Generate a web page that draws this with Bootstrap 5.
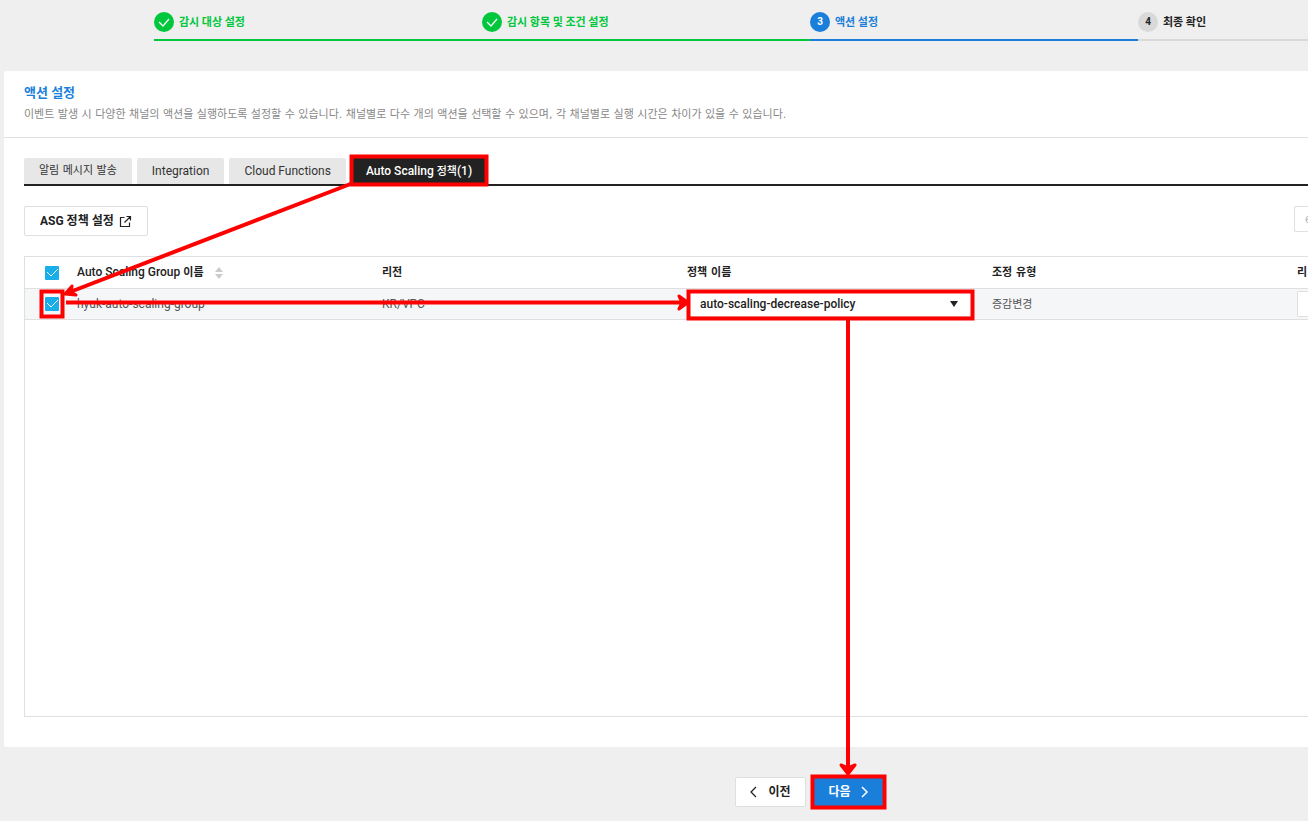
<!DOCTYPE html>
<html lang="ko">
<head>
<meta charset="utf-8">
<meta name="viewport" content="width=device-width, initial-scale=1">
<title>액션 설정</title>
<link href="https://cdn.jsdelivr.net/npm/bootstrap@5.3.0/dist/css/bootstrap.min.css" rel="stylesheet">
<style>
body{background:#efefef;color:#222;font:400 12px/20px Roboto,"Noto Sans CJK KR",sans-serif}
.ko{font-family:"DejaVu Sans","Noto Sans CJK KR",sans-serif;font-size:11px}
.steps{padding:12px 0 0 154px}
.step{flex:0 1 328px;border-bottom:2px solid #d9d9d9;height:29px;font-weight:500;gap:5px}
.step:last-child{flex:1 0 0}
.step .ko{font-family:Inter,"Noto Sans CJK KR",sans-serif;font-weight:700}
.step-num{width:20px;height:20px;border-radius:50%;background:#d9d9d9;font-size:10px;font-weight:700}
.step.done{border-color:#00c73c;color:#00c73c}
.step.done .step-num{background:#00c73c}
.step.now{border-color:#1a7fdb;color:#1a7fdb}
.step.now .step-num{background:#1a7fdb;color:#fff}
.panel{margin:30px 0 0 4px;border-radius:2px 0 0 2px}
.panel-head{padding:12px 20px;border-bottom:1px solid #dfdfdf}
.panel-head h1{font-size:13px;line-height:20px;font-weight:700;color:#1a7fdb;margin:0 0 2px}
.panel-head p{color:#888}
.panel-body{padding:20px 0 30px 20px}
.policy-tabs{border-bottom:2px solid #222;gap:5px}
.policy-tabs .nav-link{height:26px;padding:3px 15px;background:#e7e7e7;color:#333;border:0;border-radius:2px 2px 0 0}
.policy-tabs .nav-link.active{background:#222;color:#fff;font-weight:500}
.tools{padding:20px 0}
.plain{height:30px;border:1px solid #dfdfdf;border-radius:2px;background:#fff;color:#222;font-size:12px;line-height:20px;font-weight:700;padding:0 15px;gap:5px}
.step-btn{padding:0 14px;gap:10px}
.go{background:#1a7fdb;border-color:#1a7fdb;color:#fff}
.find{display:block;height:26px;border:1px solid #dfdfdf;border-right:0;border-radius:2px 0 0 2px;padding:0 0 0 10px;font-size:12px;background:#fff}
.find::placeholder{color:#bbb}
.tools .find{width:14px}
.policies .find{width:100%}
.grid-box{height:461px;border:1px solid #dfdfdf;border-right:0}
.policies{table-layout:fixed;width:100%;border-collapse:separate;border-spacing:0}
.policies th,.policies td{width:305px;height:31px;padding:0;border-bottom:1px solid #dfdfdf;white-space:nowrap}
.policies th:last-child{width:auto}
.policies th{height:32px;font-weight:500}
.policies th .ko{font-weight:700}
.policies td{background:#f5f6f8;color:#555}
.policies .pick{width:52px;padding-left:20px}
.policies .form-check-input{display:block;width:14px;height:14px;margin:0;border:0;border-radius:1px;background-color:#18aeea;background-size:14px;background-image:url("data:image/svg+xml,%3Csvg xmlns='http://www.w3.org/2000/svg' viewBox='0 0 14 14'%3E%3Cpath d='M2 6l4 4 7-7' fill='none' stroke='%23fff'/%3E%3C/svg%3E")}
.choose{position:relative;width:286px}
.choose select{display:block;appearance:none;width:100%;height:26px;border:1px solid #dfdfdf;background:#fff;color:#222;padding:0 12px;font-size:12px;font-weight:500}
.choose svg{position:absolute;right:15px;top:10px;pointer-events:none}
.foot-bar{padding:30px 0 14px 311px;gap:8px}
.guide{position:absolute;left:0;top:0;pointer-events:none}
</style>
</head>
<body>
<div class="position-relative">
  <ol class="steps list-unstyled d-flex mb-0">
    <li class="step done d-flex"><span class="step-num"><svg class="d-block" width="20" height="20" fill="none" stroke="#fff" stroke-width="1.2"><path d="M5 10l4 4 6-7"/></svg></span><span class="ko">감시 대상 설정</span></li>
    <li class="step done d-flex"><span class="step-num"><svg class="d-block" width="20" height="20" fill="none" stroke="#fff" stroke-width="1.2"><path d="M5 10l4 4 6-7"/></svg></span><span class="ko">감시 항목 및 조건 설정</span></li>
    <li class="step now d-flex"><span class="step-num text-center">3</span><span class="ko">액션 설정</span></li>
    <li class="step d-flex"><span class="step-num text-center">4</span><span class="ko">최종 확인</span></li>
  </ol>
  <main class="panel bg-white">
    <header class="panel-head">
      <h1>액션 설정</h1>
      <p class="ko mb-0">이벤트 발생 시 다양한 채널의 액션을 실행하도록 설정할 수 있습니다. 채널별로 다수 개의 액션을 선택할 수 있으며, 각 채널별로 실행 시간은 차이가 있을 수 있습니다.</p>
    </header>
    <div class="panel-body">
      <nav class="policy-tabs nav">
        <button class="nav-link ko" type="button">알림 메시지 발송</button>
        <button class="nav-link" type="button">Integration</button>
        <button class="nav-link" type="button">Cloud Functions</button>
        <button class="nav-link active" type="button">Auto Scaling <span class="ko">정책</span>(1)</button>
      </nav>
      <div class="d-flex justify-content-between align-items-start tools">
        <button class="plain d-flex align-items-center" type="button">ASG 정책 설정 <svg width="13" height="13" fill="none" stroke="#222" stroke-width="1.2"><path d="M5.500 2.500H1.500v9h9V7.500M7.500 1.500h4v4M11.500 1.500L5.500 7.500"/></svg></button>
        <input class="find" type="text" placeholder="e" aria-label="검색">
      </div>
      <div class="grid-box">
        <table class="policies">
          <thead><tr>
            <th class="pick"><input class="form-check-input" type="checkbox" checked aria-label="전체 선택"></th>
            <th>Auto Scaling Group <span class="ko">이름</span> <svg class="ms-2" width="8" height="12" fill="#ccc"><path d="M4 0l4 5H0zM4 12l4-5H0z"/></svg></th>
            <th><span class="ko">리전</span></th><th><span class="ko">정책 이름</span></th><th><span class="ko">조정 유형</span></th><th><span class="ko">리</span></th>
          </tr></thead>
          <tbody><tr>
            <td class="pick"><input class="form-check-input" type="checkbox" checked aria-label="hyuk-auto-scaling-group 선택"></td>
            <td>hyuk-auto-scaling-group</td><td>KR/VPC</td>
            <td><div class="choose"><select aria-label="정책 이름"><option>auto-scaling-decrease-policy</option></select><svg width="8" height="6" fill="#222"><path d="M0 0h8L4 6z"/></svg></div></td>
            <td><span class="ko">증감변경</span></td>
            <td><input class="find" type="text" aria-label="리"></td>
          </tr></tbody>
        </table>
      </div>
    </div>
  </main>
  <div class="foot-bar d-flex justify-content-center">
    <button class="plain step-btn d-flex align-items-center" type="button"><svg width="8" height="12" fill="none" stroke="#222" stroke-width="1.300"><path d="M6 1L1 6l5 5"/></svg>이전</button>
    <button class="plain step-btn go d-flex align-items-center" type="button">다음<svg width="8" height="12" fill="none" stroke="#fff" stroke-width="1.500"><path d="M1 1l5 5-5 5"/></svg></button>
  </div>
  <svg class="guide" width="1000" height="815" fill="none" stroke="red" stroke-width="4" aria-hidden="true">
    <path d="M351.500 156.500h135v28h-135zM41.500 291.500h21v25h-21zM688.500 291.500h284v27h-284zM812.500 776.500h72v31h-72z"/>
    <path d="M353 183L70 292M66 302.500h618M848 320v450"/>
    <path d="M72 286l-7 8 11 1-5-3zM679 296l9 6.500-9 6.500 3-6.500zM841 765l7 9 7-9-7 3z" fill="red" stroke-width="3" stroke-linecap="round" stroke-linejoin="round"/>
  </svg>
</div>
<script src="https://cdn.jsdelivr.net/npm/bootstrap@5.3.0/dist/js/bootstrap.bundle.min.js"></script>
</body>
</html>
